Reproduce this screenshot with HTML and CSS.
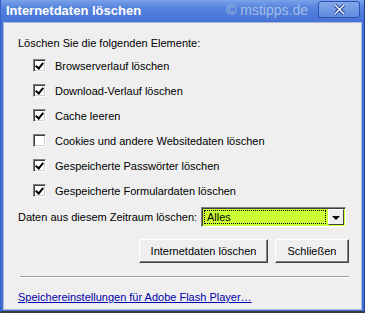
FILE: index.html
```html
<!DOCTYPE html>
<html lang="de">
<head>
    <meta charset="UTF-8">
    <title>Internetdaten löschen</title>
    <link rel="stylesheet" href="styles.css">
</head>
<body>
    <div class="window">
        <div class="titlebar">
            <span class="title">Internetdaten löschen</span>
            <span class="watermark">© mstipps.de</span>
            <button class="close" aria-label="Schließen">
                <svg width="13" height="11" viewBox="0 0 13 11">
                    <path d="M2 1 L11 10 M11 1 L2 10" stroke="#1d3f93" stroke-width="3.2" fill="none"/>
                    <path d="M2 1 L11 10 M11 1 L2 10" stroke="#ffffff" stroke-width="1.4" fill="none"/>
                </svg>
            </button>
        </div>
        <div class="client">
            <div class="heading">Löschen Sie die folgenden Elemente:</div>
            <ul class="items">
                <li><span class="box checked"></span>Browserverlauf löschen</li>
                <li><span class="box checked"></span>Download-Verlauf löschen</li>
                <li><span class="box checked"></span>Cache leeren</li>
                <li><span class="box"></span>Cookies und andere Websitedaten löschen</li>
                <li><span class="box checked"></span>Gespeicherte Passwörter löschen</li>
                <li><span class="box checked"></span>Gespeicherte Formulardaten löschen</li>
            </ul>
            <div class="range">
                <span class="label">Daten aus diesem Zeitraum löschen:</span>
                <div class="select">
                    <span class="value"><span class="focus">Alles</span></span>
                    <span class="arrow"></span>
                </div>
            </div>
            <div class="actions">
                <button class="btn wide">Internetdaten löschen</button>
                <button class="btn">Schließen</button>
            </div>
            <hr class="sep">
            <a class="link" href="#">Speichereinstellungen für Adobe Flash Player…</a>
        </div>
    </div>
</body>
</html>
```

FILE: styles.css
```css
body {
    margin: 0;
    font-family: "Liberation Sans", Tahoma, sans-serif;
    font-size: 11px;
}

.window {
    width: 365px;
    height: 313px;
    box-sizing: border-box;
    background: #4672d6;
    border-left: 1px solid #3462c8;
    border-right: 1px solid #1f3f9a;
    border-bottom: 2px solid #3a3a3a;
    display: flex;
    flex-direction: column;
    white-space: nowrap;
}

.titlebar {
    height: 22px;
    display: flex;
    align-items: center;
    padding: 0 4px 0 5px;
    background: linear-gradient(#7aa2ea, #5583dd 35%, #4672d6);
}

.title {
    color: #fff;
    font-weight: bold;
    font-size: 13px;
    margin-top: -2px;
}

.watermark {
    margin-left: auto;
    margin-right: 10px;
    color: #a5bde6;
    font-size: 14px;
    margin-top: -2px;
}

.close {
    width: 42px;
    height: 17px;
    margin-top: -4px;
    border: 1px solid #2a53b4;
    border-radius: 3px;
    background: linear-gradient(#86a8ea, #5f8be0);
    padding: 0;
    display: flex;
    align-items: center;
    justify-content: center;
}

.client {
    flex: 1;
    margin: 0 2px 1px 2px;
    background: #efefef;
    border: 1px solid #aab8d8;
    padding: 14px 12px 0 14px;
    color: #000;
}

.items {
    list-style: none;
    margin: 4px 0 0 0;
    padding: 0 0 0 15px;
}

.items li {
    height: 25px;
    display: flex;
    align-items: center;
}

.box {
    width: 11px;
    height: 11px;
    border: 1px solid;
    border-color: #808080 #fff #fff #808080;
    box-shadow: inset 1px 1px #404040, inset -1px -1px #d4d0c8;
    background: #fff;
    margin-right: 9px;
    position: relative;
}

.box.checked::after {
    content: "";
    position: absolute;
    left: 3px;
    top: 1px;
    width: 3px;
    height: 6px;
    border: solid #000;
    border-width: 0 2px 2px 0;
    transform: rotate(40deg);
}

.range {
    display: flex;
    align-items: center;
    margin-top: 4px;
}

.select {
    margin-left: auto;
    margin-right: 3px;
    width: 145px;
    height: 20px;
    box-sizing: border-box;
    border: 1px solid;
    border-color: #808080 #fff #fff #808080;
    box-shadow: inset 1px 1px #404040;
    background: #ccff33;
    display: flex;
}

.value {
    flex: 1;
    padding: 2px;
}

.focus {
    display: block;
    height: 100%;
    box-sizing: border-box;
    border: 1px dotted #000;
    padding: 0 2px;
    line-height: 12px;
}

.arrow {
    width: 16px;
    margin: 1px 1px 1px 0;
    background: #efefef;
    border: 1px solid;
    border-color: #fff #404040 #404040 #fff;
    box-sizing: border-box;
    position: relative;
}

.arrow::after {
    content: "";
    position: absolute;
    left: 3px;
    top: 6px;
    border: 4px solid transparent;
    border-top: 4px solid #000;
    border-bottom: 0;
}

.actions {
    display: flex;
    justify-content: flex-end;
    gap: 7px;
    margin-top: 12px;
}

.btn {
    height: 24px;
    font: inherit;
    background: #efefef;
    border: 1px solid;
    border-color: #fff #404040 #404040 #fff;
    box-shadow: inset -1px -1px #808080;
    padding: 0;
}

.wide {
    width: 129px;
}

.btn:last-child {
    width: 74px;
}

.sep {
    margin: 13px 0 0 2px;
    border: 0;
    border-top: 1px solid #a0a0a0;
    border-bottom: 1px solid #fff;
}

.link {
    display: block;
    margin-top: 13px;
    color: #0000aa;
}
```
